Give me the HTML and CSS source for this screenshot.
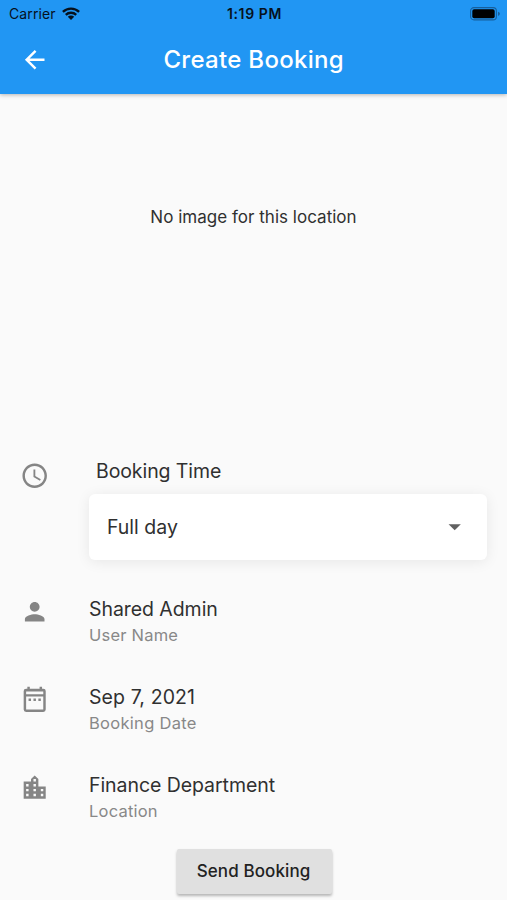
FILE: index.html
```html
<!DOCTYPE html>
<html lang="en">
<head>
<meta charset="utf-8">
<title>Create Booking</title>
<link rel="stylesheet" href="styles.css">
</head>
<body>
<header class="top">
  <div class="status">
    <div class="carrier"><span>Carrier</span>
      <svg class="wifi" viewBox="0 0 18 13"><g fill="none" stroke="#06111d" stroke-width="2.3"><path d="M.9 4.9a11.5 11.5 0 0 1 16.2 0"/><path d="M3.8 7.9a7.4 7.4 0 0 1 10.4 0"/></g><path d="M9 13 5.8 9.8a4.6 4.6 0 0 1 6.4 0z" fill="#06111d"/></svg>
    </div>
    <div class="clock">1:19 PM</div>
    <svg class="battery" viewBox="0 0 30 14"><rect x=".6" y=".6" width="25.8" height="12.3" rx="3.4" fill="none" stroke="#175f9c" stroke-width="1.1"/><rect x="2.3" y="2.3" width="22.4" height="8.9" rx="1.8" fill="#000"/><path d="M28 4.7q1.9.7 1.9 2.1T28 8.9z" fill="#175f9c"/></svg>
  </div>
  <div class="bar">
    <svg class="icon back" viewBox="0 0 24 24"><path d="M20 11H7.83l5.59-5.59L12 4l-8 8 8 8 1.41-1.41L7.83 13H20v-2z"/></svg>
    <h1>Create Booking</h1>
  </div>
</header>
<main>
  <div class="photo">No image for this location</div>
  <section class="time">
    <svg class="icon" viewBox="0 0 24 24"><path d="M11.99 2C6.47 2 2 6.48 2 12s4.47 10 9.99 10C17.52 22 22 17.52 22 12S17.52 2 11.99 2zM12 20c-4.42 0-8-3.58-8-8s3.58-8 8-8 8 3.58 8 8-3.58 8-8 8z"/><path d="M12.500 7H11v6l5.250 3.150.750-1.230-4.500-2.670z"/></svg>
    <div class="field">
      <div class="label">Booking Time</div>
      <div class="select"><span>Full day</span><svg class="icon arrow" viewBox="0 0 24 24"><path d="M7 10l5 5 5-5z"/></svg></div>
    </div>
  </section>
  <section class="row">
    <svg class="icon" viewBox="0 0 24 24"><path d="M12 12c2.21 0 4-1.79 4-4s-1.79-4-4-4-4 1.79-4 4 1.79 4 4 4zm0 2c-2.67 0-8 1.34-8 4v2h16v-2c0-2.66-5.33-4-8-4z"/></svg>
    <div><div class="title">Shared Admin</div><div class="sub">User Name</div></div>
  </section>
  <section class="row">
    <svg class="icon" viewBox="0 0 24 24"><path fill-rule="evenodd" d="M5 3H6V1.500H8V3H16V1.500H18V3H19a2 2 0 0 1 2 2V20a2 2 0 0 1-2 2H5a2 2 0 0 1-2-2V5a2 2 0 0 1 2-2zM5 5.300V7.500H19V5.300zM5 9.400V20H19V9.400zM7 11H9v2H7zM11 11h2v2h-2zM15 11h2v2h-2z"/></svg>
    <div><div class="title date">Sep 7, 2021</div><div class="sub wide">Booking Date</div></div>
  </section>
  <section class="row">
    <svg class="icon" viewBox="0 0 24 24"><path d="M15 11V5l-3-3-3 3v2H3v14h18V11h-6zm-8 8H5v-2h2v2zm0-4H5v-2h2v2zm0-4H5V9h2v2zm6 8h-2v-2h2v2zm0-4h-2v-2h2v2zm0-4h-2V9h2v2zm0-4h-2V5h2v2zm6 12h-2v-2h2v2zm0-4h-2v-2h2v2z"/></svg>
    <div><div class="title">Finance Department</div><div class="sub">Location</div></div>
  </section>
  <button class="send" type="button">Send Booking</button>
</main>
</body>
</html>
```

FILE: styles.css
```css
* { box-sizing: border-box; }
body {
  margin: 0;
  height: 900px;
  overflow: hidden;
  background: #fafafa;
  color: #303030;
  font-family: Inter, "Liberation Sans", sans-serif;
}
.top {
  position: relative;
  height: 94px;
  background: #2196f3;
  box-shadow: 0 1px 4px rgba(0, 0, 0, .28);
}
.status {
  display: grid;
  grid-template-columns: 1fr auto 1fr;
  align-items: center;
  height: 27px;
  padding: 0 7px 0 9px;
  color: #06111d;
  font-size: 14px;
  line-height: 27px;
}
.carrier { display: flex; align-items: center; gap: 6px; letter-spacing: .1px; }
.wifi { width: 18px; height: 13px; }
.clock { font-size: 14px; font-weight: 600; letter-spacing: .6px; }
.battery { width: 30px; height: 14px; justify-self: end; }
.bar {
  display: grid;
  grid-template-columns: 30px 1fr 30px;
  align-items: center;
  height: 66px;
  padding: 0 20px 0 20.4px;
}
.icon { display: block; width: 29.4px; height: 29.4px; fill: #858585; }
.back { fill: #fff; }
h1 {
  margin: 0;
  color: #fff;
  font-size: 24px;
  font-weight: 500;
  line-height: 30px;
  text-align: center;
  letter-spacing: .3px;
}
.photo {
  height: 245px;
  display: flex;
  align-items: center;
  justify-content: center;
  font-size: 17px;
  letter-spacing: .02px;
}
.time, .row {
  display: grid;
  grid-template-columns: 29.4px 1fr;
  column-gap: 39.4px;
  align-items: start;
  padding: 0 20px 0 20.2px;
}
.time { margin-top: 118px; height: 140px; }
.time > .icon { margin-top: 4px; }
.label { height: 37px; padding: 1px 0 0 7px; font-size: 19.5px; line-height: 27px; letter-spacing: -.08px; }
.select {
  height: 66px;
  padding: 0 18px;
  display: flex;
  align-items: center;
  justify-content: space-between;
  border-radius: 6px;
  background: #fff;
  box-shadow: 0 2px 14px rgba(0, 0, 0, .08);
  font-size: 19.5px;
}
.arrow { fill: #616161; }
.row { height: 88px; }
.title { margin-top: -1px; font-size: 19.5px; line-height: 26px; letter-spacing: -.06px; }
.date { letter-spacing: .1px; }
.sub { color: #888; font-size: 16.5px; line-height: 26px; letter-spacing: .22px; }
.wide { letter-spacing: .3px; }
.send {
  display: block;
  width: 155px;
  height: 45px;
  margin: -12px auto 0 177px;
  padding: 0 2px 0 0;
  border: 0;
  border-radius: 2px;
  background: #e0e0e0;
  box-shadow: 0 2px 3px rgba(0, 0, 0, .28);
  color: #222;
  font: 500 17px/43px Inter, "Liberation Sans", sans-serif;
  letter-spacing: .1px;
}
```
